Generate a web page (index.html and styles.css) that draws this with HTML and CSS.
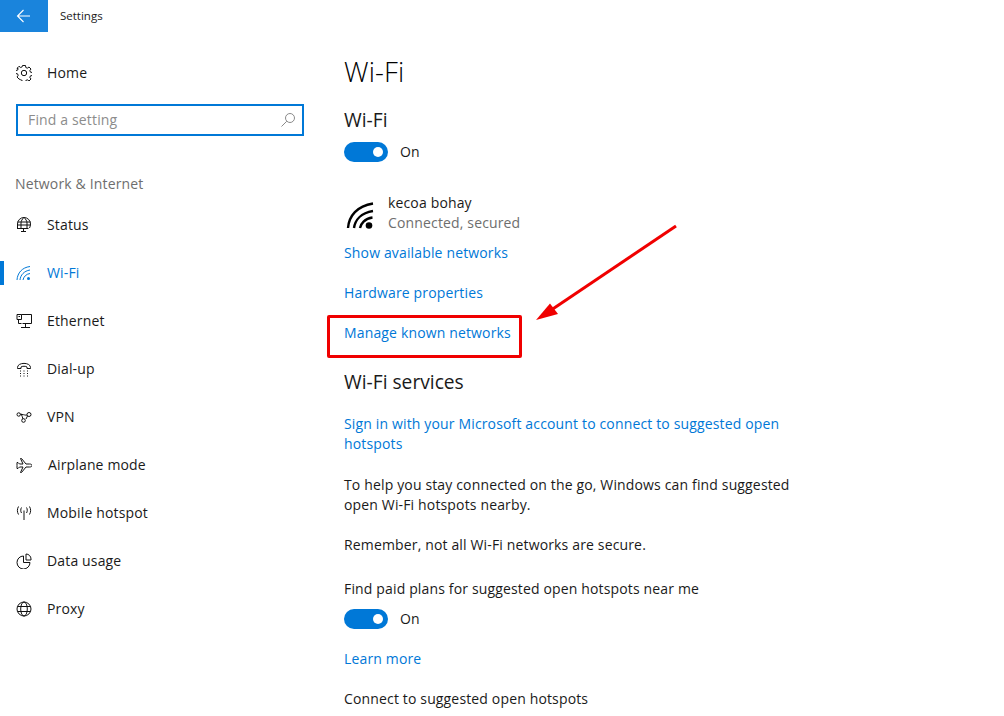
FILE: index.html
```html
<!DOCTYPE html>
<html lang="en">
<head>
<meta charset="utf-8">
<title>Settings</title>
<link rel="stylesheet" href="styles.css">
</head>
<body>
<header class="titlebar">
  <div class="back">
    <svg width="16" height="16" viewBox="0 0 16 16" fill="none" stroke="#fff" stroke-width="1.1"><path d="M1.500 8H14M7.500 2 1.500 8l6 6"/></svg>
  </div>
  <span class="app-title">Settings</span>
</header>
<div class="app">
  <aside class="sidebar">
    <div class="nav-row home">
      <svg class="ico" viewBox="0 0 16 16" fill="none" stroke="#111" stroke-width="1"><circle cx="8" cy="8" r="2.700"/><path d="M6.500.5h3l.3 2 1.500.7 1.700-1.200 2 2-1.200 1.700.7 1.500 2 .3v3l-2 .3-.7 1.500 1.200 1.700-2 2-1.700-1.200-1.500.7-.3 2h-3l-.3-2-1.500-.7L3 14l-2-2 1.200-1.700-.7-1.500-2-.3v-3l2-.3.700-1.500L1 3.300l2-2 1.700 1.200 1.500-.7z"/></svg>
      <span>Home</span>
    </div>
    <div class="search">
      <span class="placeholder">Find a setting</span>
      <svg width="16" height="16" viewBox="0 0 16 16" fill="none" stroke="#8a8a8a" stroke-width="1"><circle cx="10" cy="6" r="4.500"/><path d="M6.800 9.200 1.500 14.500"/></svg>
    </div>
    <div class="section-label">Network &amp; Internet</div>
    <nav class="nav">
      <div class="nav-row">
        <svg class="ico" viewBox="0 0 16 16" fill="none" stroke="#111" stroke-width="1"><path d="M1.500 11V7a6.500 6.500 0 0 1 13 0c0 1.500-.4 2.800-1 4M1.500 5h13M1 11.500h11.500M5 11V6c0-2 1.300-4 3-5.500C9.700 2 11 4 11 6v5M1.500 8h13M5 14.500h5M7.500 11.500v3"/></svg>
        <span>Status</span>
      </div>
      <div class="nav-row active">
        <svg class="ico" viewBox="0 0 16 16" fill="none" stroke="#0078d7" stroke-width="1"><path d="M1 15C1.500 8 6 2.500 14 1.500M4 15c.5-5 4-9 10-10M7 15c.5-3 3-6 7-6.500"/><circle cx="12.500" cy="13.500" r="1.500" fill="#0078d7" stroke="none"/></svg>
        <span>Wi-Fi</span>
      </div>
      <div class="nav-row">
        <svg class="ico" viewBox="0 0 16 16" fill="none" stroke="#111" stroke-width="1"><path d="M5.500 1.500h10v9h-9M1 1.500h4.500v5H1zM2.500 6.500v4h3M2.500 3.500h1.500M9.500 10.500v3.500M5 14.500h9"/></svg>
        <span>Ethernet</span>
      </div>
      <div class="nav-row">
        <svg class="ico" viewBox="0 0 16 16" fill="none" stroke="#111" stroke-width="1"><path d="M1.500 6.500C1.500 1 14.500 1 14.500 6.500v1h-3.500V6c-1-1-5-1-6 0v1.500H1.500z"/><path d="M4 10h1M7.500 10h1M11 10h1M4 12.500h1M7.500 12.500h1M11 12.500h1M4 15h1M7.500 15h1M11 15h1"/></svg>
        <span>Dial-up</span>
      </div>
      <div class="nav-row">
        <svg class="ico" viewBox="0 0 16 16" fill="none" stroke="#111" stroke-width="1"><circle cx="2.700" cy="5.500" r="1.700"/><circle cx="13" cy="5.500" r="2"/><circle cx="7.500" cy="11.500" r="1.800"/><path d="M4.500 5.500H6c2 0 3.500 1 5 .5M5 4.500c1 2 1.500 4 2 5.500M10 10l1.500-3"/></svg>
        <span>VPN</span>
      </div>
      <div class="nav-row">
        <svg class="ico" viewBox="0 0 16 16" fill="none" stroke="#111" stroke-width="1"><path d="M16 8.500c0-1-1-1.500-2.500-1.500H10L5.500 1.500H4.500L7 7H3.500L2 5.500H1V8.500M16 8.500c0 1-1 1.500-2.500 1.500H10L5.500 15.500H4.500L7 10H3.500L2 11.500H1V8.500"/></svg>
        <span class="shift">Airplane mode</span>
      </div>
      <div class="nav-row">
        <svg class="ico" viewBox="0 0 16 16" fill="none" stroke="#111" stroke-width="1"><path d="M8 5.500V15M5.500 2.500C4.500 4 4.500 6.500 5.500 8M10.500 2.500c1 1.500 1 4 0 5.500M2.500 1.500C1 4 1 7 2.500 9.500M13.500 1.500c1.500 2.500 1.500 5.500 0 8"/></svg>
        <span>Mobile hotspot</span>
      </div>
      <div class="nav-row">
        <svg class="ico" viewBox="0 0 16 16" fill="none" stroke="#111" stroke-width="1"><path d="M7.500 3A6.500 6.500 0 1 0 14 9.500H7.500zM10 1a5 5 0 0 1 5 5v1h-5z"/></svg>
        <span>Data usage</span>
      </div>
      <div class="nav-row">
        <svg class="ico" viewBox="0 0 16 16" fill="none" stroke="#111" stroke-width="1"><circle cx="8" cy="8" r="7"/><ellipse cx="8" cy="8" rx="3.300" ry="7"/><path d="M1.500 5.500h13M1.500 10.500h13"/></svg>
        <span>Proxy</span>
      </div>
    </nav>
  </aside>
  <main class="main">
    <h1 class="page-title">Wi-Fi</h1>
    <h2 class="heading first">Wi-Fi</h2>
    <div class="toggle-row">
      <span class="toggle"><span class="knob"></span></span>
      <span>On</span>
    </div>
    <div class="network">
      <svg class="net-ico" viewBox="0 0 28 28" fill="none" stroke="#000" stroke-width="2.400"><path d="M2 27C3 15 11 5 27 2.500M8 27c1-8 7-15 19-17M14 27c.8-4 4.500-9.500 12.500-10.500"/><circle cx="23" cy="24.500" r="3.300" fill="#000" stroke="none"/></svg>
      <div class="net-text">
        <div>kecoa bohay</div>
        <div class="muted">Connected, secured</div>
      </div>
    </div>
    <a class="link l1">Show available networks</a>
    <a class="link l2">Hardware properties</a>
    <a class="link l2">Manage known networks</a>
    <h2 class="heading services">Wi-Fi services</h2>
    <a class="link para">Sign in with your Microsoft account to connect to suggested open hotspots</a>
    <p class="para p1">To help you stay connected on the go, Windows can find suggested open Wi-Fi hotspots nearby.</p>
    <p class="para p1">Remember, not all Wi-Fi networks are secure.</p>
    <p class="para p2">Find paid plans for suggested open hotspots near me</p>
    <div class="toggle-row t2">
      <span class="toggle"><span class="knob"></span></span>
      <span>On</span>
    </div>
    <a class="link l3">Learn more</a>
    <p class="para p3">Connect to suggested open hotspots</p>
  </main>
</div>
<div class="callout"></div>
<svg class="arrow" width="1004" height="716" viewBox="0 0 1004 716"><path d="M676 226 549 311.500" stroke="#f00000" stroke-width="3" fill="none"/><path d="M536 320 550 303.500 558 314z" fill="#f00000"/></svg>
</body>
</html>
```
FILE: styles.css
```css
* { box-sizing: border-box; }
html, body { margin: 0; height: 716px; overflow: hidden; }
body {
  background: #fff;
  color: #1a1a1a;
  font: 14px/20px "Open Sans", "Noto Sans", sans-serif;
  letter-spacing: .15px;
  position: relative;
}
.titlebar { display: flex; align-items: center; height: 32px; }
.back {
  width: 48px; height: 32px; background: #1a84dc;
  display: flex; align-items: center; justify-content: center;
}
.app-title { font-size: 11.5px; margin-left: 12px; letter-spacing: 0; }
.app { display: flex; }
.sidebar { width: 344px; flex: none; display: flex; flex-direction: column; padding-top: 17px; }
.nav-row { display: flex; align-items: center; height: 48px; padding-left: 16px; gap: 15px; }
.ico { width: 16px; height: 16px; flex: none; }
.shift { margin-left: 1px; }
.search {
  width: 288px; height: 32px; margin: 7px 0 0 16px;
  border: 2px solid #0078d7;
  display: flex; align-items: center; justify-content: space-between;
  padding: 0 6px 0 10px;
}
.placeholder { color: #8c8c8c; }
.section-label { color: #6e6e6e; margin: 38px 0 0 15px; }
.nav { margin-top: 7px; }
.active { color: #0078d7; position: relative; }
.active::before {
  content: ""; position: absolute; left: 0; top: 12px;
  width: 4px; height: 24px; background: #0078d7;
}
.main { width: 460px; padding-top: 20px; }
.page-title { font-size: 27.5px; font-weight: 300; color: #000; line-height: 40px; margin: 0; }
.heading { font-size: 19.2px; font-weight: 400; letter-spacing: 0; line-height: 28px; margin: 0; }
.heading.first { margin-top: 14px; }
.heading.services { margin-top: 25px; }
.toggle-row { display: flex; align-items: center; gap: 12px; margin-top: 6px; height: 24px; }
.toggle {
  width: 44px; height: 20px; border-radius: 10px; background: #0078d7;
  display: flex; align-items: center; justify-content: flex-end; padding-right: 5px;
}
.knob { width: 10px; height: 10px; border-radius: 50%; background: #fff; }
.network { display: flex; gap: 14px; margin-top: 29px; align-items: flex-start; }
.net-ico { width: 28px; height: 28px; margin: 8px 0 0 2px; flex: none; }
.muted { color: #6e6e6e; }
.link { display: block; color: #0078d7; }
.l1 { margin-top: 10px; }
.l2 { margin-top: 20px; }
.para { margin: 0; display: block; }
.heading + .para { margin-top: 18px; }
.p1 { margin-top: 21px; }
.p1 + .p1 { margin-top: 20px; }
.p2 { margin-top: 24px; }
.t2 { margin-top: 8px; }
.l3 { margin-top: 18px; }
.p3 { margin-top: 20px; }
.callout {
  position: absolute; left: 327px; top: 315px; width: 195px; height: 43px;
  border: 3px solid #f00000; border-radius: 2px;
}
.arrow { position: absolute; left: 0; top: 0; pointer-events: none; }
```
